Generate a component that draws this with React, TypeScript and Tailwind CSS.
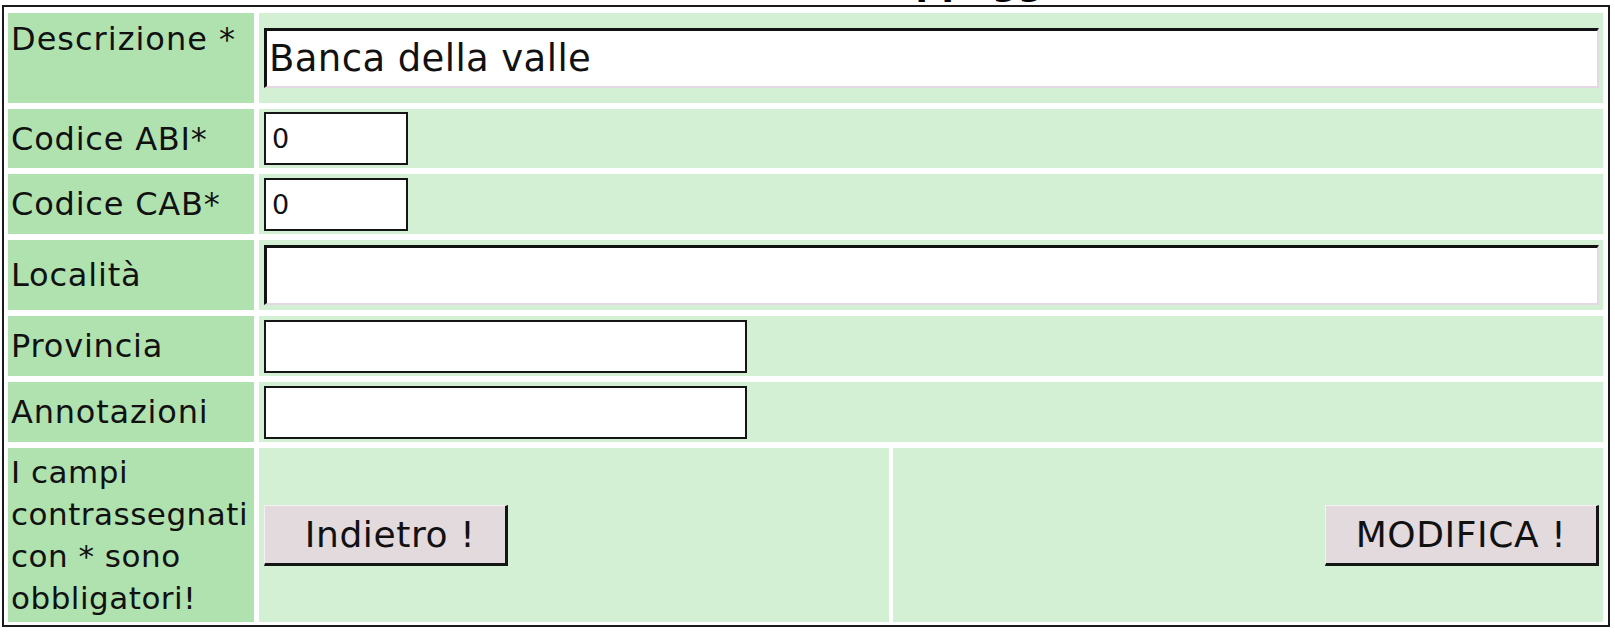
const labelCls =
  "bg-[#b0e2b0] text-[32px] tracking-[0.8px] text-[#111] pl-[3px] flex items-center";
const cellCls = "bg-[#d4f0d4] flex items-center pl-[5px] pr-[4px]";

const font = { fontFamily: '"DejaVu Sans", Verdana, sans-serif' };

function WideInput({ value }: { value?: string }) {
  return (
    <input
      type="text"
      defaultValue={value}
      className="w-full h-[60px] bg-white border-t-[3px] border-l-[3px] border-b-2 border-r-2 border-t-[#111] border-l-[#111] border-b-[#e4d8e4] border-r-[#e4d8e4] pl-[2px] text-[37px] tracking-[0.4px] text-[#111] outline-none"
      style={font}
    />
  );
}

function BoxInput({ value, w }: { value?: string; w: string }) {
  return (
    <input
      type="text"
      defaultValue={value}
      className={`${w} h-[53px] bg-white border-2 border-[#151515] pl-[6px] text-[27px] text-[#111] outline-none`}
      style={font}
    />
  );
}

function Btn({ children, w, extra = "" }: { children: string; w: string; extra?: string }) {
  return (
    <button
      className={`${w} ${extra} h-[61px] bg-[#e2dadd] border-t border-l border-t-[#f5f1f3] border-l-[#f5f1f3] border-b-[3px] border-r-[3px] border-b-[#151515] border-r-[#151515] text-[36px] tracking-[0.6px] text-[#111] pt-[1px]`}
      style={font}
    >
      {children}
    </button>
  );
}

export default function App() {
  return (
    <div className="w-[1615px] h-[635px] bg-white pl-[2px] pr-[5px]" style={font}>
      {/* page title, only the descenders peek in above the table */}
      <div className="h-[5px] overflow-hidden">
        <div className="-mt-[35px] pl-[717px] text-[36px] font-bold leading-none text-black whitespace-nowrap">
          Banca d'appoggio
        </div>
      </div>

      <div className="border-2 border-[#1a1a1a] pt-[6px] pb-[3px] pl-[4px] pr-[5px]">
        <div className="grid grid-cols-[246px_1fr] gap-x-[5px] gap-y-[6px]">
          <div className="bg-[#b0e2b0] text-[32px] tracking-[1px] text-[#111] pl-[3px] pt-[8px] h-[90px] leading-[37px]">
            Descrizione *
          </div>
          <div className={cellCls}>
            <WideInput value="Banca della valle" />
          </div>

          <div className={`${labelCls} h-[59px]`}>Codice ABI*</div>
          <div className={cellCls}>
            <BoxInput value="0" w="w-[144px] h-[52px]" />
          </div>

          <div className={`${labelCls} h-[60px]`}>Codice CAB*</div>
          <div className={cellCls}>
            <BoxInput value="0" w="w-[144px] h-[52px]" />
          </div>

          <div className={`${labelCls} h-[70px]`}>Località</div>
          <div className={cellCls}>
            <WideInput />
          </div>

          <div className={`${labelCls} h-[60px]`}>Provincia</div>
          <div className={cellCls}>
            <BoxInput w="w-[483px]" />
          </div>

          <div className={`${labelCls} h-[60px]`}>Annotazioni</div>
          <div className={cellCls}>
            <BoxInput w="w-[483px]" />
          </div>

          <div className="bg-[#b0e2b0] text-[31px] tracking-[0.5px] leading-[42px] text-[#111] pl-[3px] h-[174px] flex items-center">
            <span>
              I campi contrassegnati con * sono obbligatori!
            </span>
          </div>
          <div className="grid grid-cols-[630px_1fr] gap-x-[4px]">
            <div className="bg-[#d4f0d4] flex items-center pl-[5px]">
              <Btn w="w-[244px]" extra="pl-[10px]">Indietro !</Btn>
            </div>
            <div className="bg-[#d4f0d4] flex items-center justify-end pr-[4px]">
              <Btn w="w-[274px]">MODIFICA !</Btn>
            </div>
          </div>
        </div>
      </div>
    </div>
  );
}
